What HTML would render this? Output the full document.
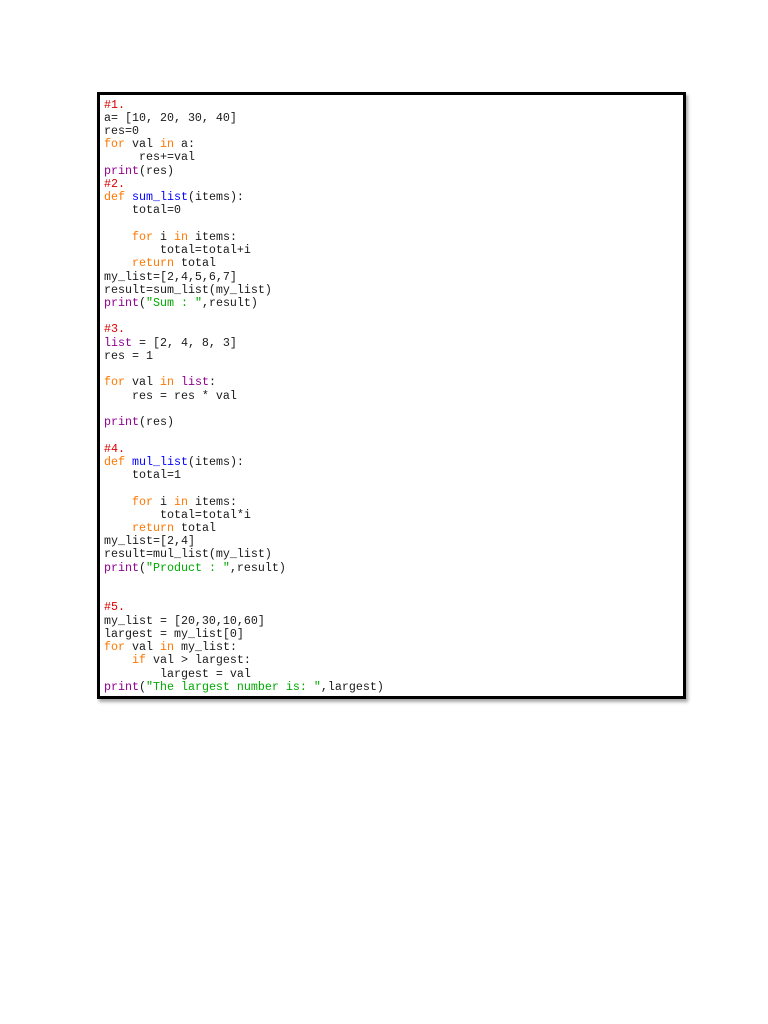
<!DOCTYPE html>
<html><head><meta charset="utf-8"><style>
html,body{margin:0;padding:0;background:#fff;width:768px;height:1024px;overflow:hidden}
.box{position:absolute;left:97px;top:92px;width:583px;height:601px;border:3px solid #000;background:#fff;box-shadow:2px 3px 3px rgba(0,0,0,.35)}
pre{position:absolute;left:104px;top:98.5px;margin:0;font-family:"Liberation Mono",monospace;font-size:11.67px;line-height:13.23px;color:#1a1a1a}
.k{color:#ff7700}.c{color:#dd0000}.p{color:#900090}.f{color:#0000ff}.s{color:#00aa00}
</style></head><body>
<div class="box"></div>
<pre><span class="c">#1.</span>
a= [10, 20, 30, 40]
res=0
<span class="k">for</span> val <span class="k">in</span> a:
     res+=val
<span class="p">print</span>(res)
<span class="c">#2.</span>
<span class="k">def</span> <span class="f">sum_list</span>(items):
    total=0

    <span class="k">for</span> i <span class="k">in</span> items:
        total=total+i
    <span class="k">return</span> total
my_list=[2,4,5,6,7]
result=sum_list(my_list)
<span class="p">print</span>(<span class="s">"Sum : "</span>,result)

<span class="c">#3.</span>
<span class="p">list</span> = [2, 4, 8, 3]
res = 1

<span class="k">for</span> val <span class="k">in</span> <span class="p">list</span>:
    res = res * val

<span class="p">print</span>(res)

<span class="c">#4.</span>
<span class="k">def</span> <span class="f">mul_list</span>(items):
    total=1

    <span class="k">for</span> i <span class="k">in</span> items:
        total=total*i
    <span class="k">return</span> total
my_list=[2,4]
result=mul_list(my_list)
<span class="p">print</span>(<span class="s">"Product : "</span>,result)


<span class="c">#5.</span>
my_list = [20,30,10,60]
largest = my_list[0]
<span class="k">for</span> val <span class="k">in</span> my_list:
    <span class="k">if</span> val &gt; largest:
        largest = val
<span class="p">print</span>(<span class="s">"The largest number is: "</span>,largest)</pre>
</body></html>
